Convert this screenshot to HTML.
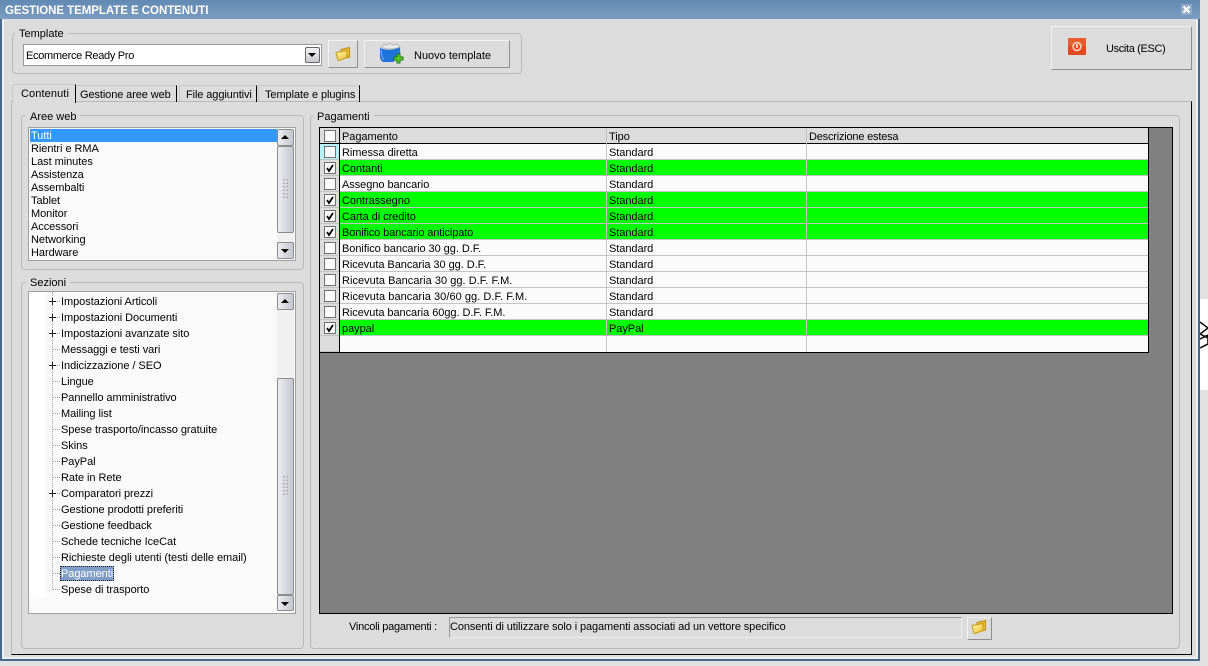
<!DOCTYPE html>
<html><head><meta charset="utf-8">
<style>
html,body{margin:0;padding:0}
body{width:1208px;height:666px;position:relative;overflow:hidden;background:#e2e2e2;font:11px/13px "Liberation Sans",sans-serif;color:#000}
div,span.a{position:absolute;box-sizing:border-box}
.t{white-space:nowrap;height:13px;line-height:13px;margin-top:1px;letter-spacing:-.05px}
.g{border:1px solid #b9b9b9;border-radius:4px}
.lg{background:#dcdcdc;padding:0 4px;white-space:nowrap;height:13px;line-height:13px;margin-top:1px}
.btn{background:#dcdcdc;border:1px solid;border-color:#f2f2f2 #8e8e8e #8e8e8e #f2f2f2}
.sb{background:linear-gradient(90deg,#eeeef2,#d8d8e0 50%,#c6c6ce);border:1px solid #8c8c8c;border-radius:2px}
.ar{width:0;height:0;border-left:5px solid transparent;border-right:5px solid transparent}
.row{left:320px;width:828px;height:16px;background:#fbfbfb;border-bottom:1px solid #c4c4c4}
.row.on{background:#00ff00}
.ind{left:320px;width:19px;height:16px;background:#dcdcdc;border-bottom:1px solid #c4c4c4}
.cb{left:324px;width:12px;height:12px;background:#fff;border:1px solid #707070}
.vl{top:128px;width:1px;height:224px;background:#c4c4c4}
.dots{width:7px;height:22px;background-image:radial-gradient(circle,#a8a8a8 0.8px,transparent 1px);background-size:3.5px 3.5px}
.h{border-top:1px dotted #a0a0a0;height:1px;width:8px;left:52px}
.pl{left:49px;width:7px;height:7px;background:linear-gradient(#222,#222) center/7px 1px no-repeat,linear-gradient(#222,#222) center/1px 7px no-repeat,#fff}
</style></head><body>

<!-- window frame -->
<div style="left:0;top:0;width:1200px;height:661px;background:#dcdcdc;border-left:2px solid #45688c;border-right:2px solid #45688c;border-bottom:2px solid #45688c"></div>
<div style="left:2px;top:19px;width:2px;height:640px;background:#eef0f2"></div>
<div style="left:1196px;top:19px;width:2px;height:640px;background:#eef0f2"></div>
<div style="left:2px;top:657px;width:1196px;height:2px;background:#eef0f2"></div>
<div style="left:1200px;top:299px;width:8px;height:91px;background:#fff"></div>
<svg style="position:absolute;left:1200px;top:320px" width="8" height="30" viewBox="0 0 8 30"><path d="M0 2L8 8M8 8L0 14L8 18M0 19L8 15M0 28L8 24M8 15V24" fill="none" stroke="#111" stroke-width="1.6"/></svg>

<!-- title -->
<div style="left:0;top:0;width:1200px;height:19px;background:linear-gradient(#6289b3,#7b9cc2)"></div>
<div class="t" style="left:5px;top:4px;color:#fff;font:bold 11.5px/13px 'Liberation Sans',sans-serif;letter-spacing:-.05px">GESTIONE TEMPLATE E CONTENUTI</div>
<div style="left:1181px;top:4px;width:11px;height:11px;background:#8fabc9;border-radius:1px"></div>
<svg style="position:absolute;left:1182px;top:5px" width="9" height="9" viewBox="0 0 9 9"><path d="M1.5 1.5L7.5 7.5M7.5 1.5L1.5 7.5" stroke="#fff" stroke-width="2.2"/></svg>

<!-- template group -->
<div class="g" style="left:12px;top:33px;width:510px;height:41px"></div>
<div class="lg" style="left:15px;top:27px">Template</div>
<div style="left:23px;top:44px;width:299px;height:22px;background:#fff;border:1px solid #9a9a9a"></div>
<div class="t" style="left:26px;top:49px;letter-spacing:-.3px">Ecommerce Ready Pro</div>
<div style="left:305px;top:47px;width:15px;height:16px;background:linear-gradient(#f4f4f6,#c8c8d0);border:1px solid #666;border-radius:2px"></div>
<div class="ar" style="left:308px;top:53px;border-top:4px solid #000;border-left-width:4px;border-right-width:4px"></div>

<svg width="0" height="0" style="position:absolute"><defs><linearGradient id="fg" x1="0" y1="0" x2="1" y2="1"><stop offset="0" stop-color="#fff6b0"/><stop offset="1" stop-color="#eec02c"/></linearGradient></defs></svg>

<div class="btn" style="left:328px;top:40px;width:30px;height:28px"></div>
<svg style="position:absolute;left:335px;top:46px" width="16" height="16" viewBox="0 0 16 16"><path d="M6 5V3.5L14.5 1.5V11L11 12Z" fill="#e8bd34" stroke="#b88e14"/><path d="M1 6.5L12 4.5V11.5L4 14.5H3Z" fill="url(#fg)" stroke="#c49a18"/></svg>

<div class="btn" style="left:364px;top:40px;width:146px;height:28px"></div>
<svg style="position:absolute;left:379px;top:42px" width="26" height="24" viewBox="0 0 26 24"><path d="M1 6Q10 10 21 5L21.5 15L14 20L4 20Q1 18 1 15Z" fill="#1e74d8"/><path d="M2.5 8Q2 15 5 18" stroke="#7ab4f0" fill="none"/><path d="M2 5L5 2L8 3L11 1L14 3L18 2L21 5Q11 9 2 5Z" fill="#e8e8e8" stroke="#b0b0b0" stroke-width=".8"/><path d="M15 15h3v-3h3v3h3v3h-3v3h-3v-3h-3z" fill="#5ad020" stroke="#1c7a12"/></svg>
<div class="t" style="left:414px;top:49px;letter-spacing:0">Nuovo template</div>

<!-- exit -->
<div class="btn" style="left:1051px;top:26px;width:141px;height:44px"></div>
<svg style="position:absolute;left:1068px;top:38px" width="18" height="17" viewBox="0 0 18 17"><rect width="18" height="17" rx="1" fill="#e2491f"/><rect width="18" height="8" fill="#f06a40" opacity=".6"/><circle cx="9" cy="8.5" r="4" fill="none" stroke="#ffd8c8" stroke-width="1.5"/><path d="M9 6V10" stroke="#ffe8e0" stroke-width="1.5"/></svg>
<div class="t" style="left:1106px;top:42px;letter-spacing:-.35px">Uscita (ESC)</div>

<!-- tabs & page -->
<div style="left:11px;top:101px;width:1181px;height:554px;border-top:1px solid #b9b9b9;border-left:1px solid #b9b9b9;border-right:1px solid #000;border-bottom:1px solid #000"></div>
<div style="left:12px;top:84px;width:64px;height:19px;background:#dcdcdc;border-top:1px solid #c8c8c8;border-left:1px solid #c8c8c8;border-right:1px solid #000;border-radius:3px 0 0 0"></div>
<div class="t" style="left:21px;top:87px;letter-spacing:.1px">Contenuti</div>
<div style="left:77px;top:85px;width:100px;height:17px;border-top:1px solid #c8c8c8;border-right:1px solid #000"></div>
<div class="t" style="left:80px;top:88px;letter-spacing:-.1px">Gestione aree web</div>
<div style="left:179px;top:85px;width:78px;height:17px;border-top:1px solid #c8c8c8;border-left:1px solid #c8c8c8;border-right:1px solid #000"></div>
<div class="t" style="left:186px;top:88px;letter-spacing:-.1px">File aggiuntivi</div>
<div style="left:258px;top:85px;width:102px;height:17px;border-top:1px solid #c8c8c8;border-left:1px solid #c8c8c8;border-right:1px solid #000"></div>
<div class="t" style="left:265px;top:88px;letter-spacing:-.08px">Template e plugins</div>

<!-- aree web -->
<div class="g" style="left:21px;top:115px;width:283px;height:155px"></div>
<div class="lg" style="left:26px;top:110px">Aree web</div>
<div style="left:28px;top:127px;width:268px;height:134px;background:#fafafa;border:1px solid #a0a0a0"></div>
<div style="left:30px;top:129px;width:247px;height:13px;background:#3399ff"></div>
<div class="t" style="left:31px;top:129px;color:#fff">Tutti</div>
<div class="t" style="left:31px;top:142px">Rientri e RMA</div>
<div class="t" style="left:31px;top:155px">Last minutes</div>
<div class="t" style="left:31px;top:168px">Assistenza</div>
<div class="t" style="left:31px;top:181px">Assembalti</div>
<div class="t" style="left:31px;top:194px">Tablet</div>
<div class="t" style="left:31px;top:207px">Monitor</div>
<div class="t" style="left:31px;top:220px">Accessori</div>
<div class="t" style="left:31px;top:233px">Networking</div>
<div class="t" style="left:31px;top:246px">Hardware</div>
<div style="left:277px;top:129px;width:17px;height:130px;background:#f0f0f0"></div>
<div class="sb" style="left:277px;top:129px;width:17px;height:17px"></div>
<div class="ar" style="left:281px;top:135px;border-bottom:4px solid #000;border-left-width:4px;border-right-width:4px"></div>
<div class="sb" style="left:277px;top:146px;width:17px;height:87px"></div>
<div class="dots" style="left:282px;top:178px"></div>
<div class="sb" style="left:277px;top:242px;width:17px;height:17px"></div>
<div class="ar" style="left:281px;top:249px;border-top:4px solid #000;border-left-width:4px;border-right-width:4px"></div>

<!-- sezioni -->
<div class="g" style="left:21px;top:282px;width:283px;height:367px"></div>
<div class="lg" style="left:26px;top:276px">Sezioni</div>
<div style="left:28px;top:291px;width:268px;height:323px;background:#fafafa;border:1px solid #a0a0a0"></div>
<div style="left:29px;top:292px;width:16px;height:305px;background:#fff"></div>
<div style="left:52px;top:292px;width:1px;height:298px;border-left:1px dotted #a8a8a8"></div>
<div class="h" style="top:301px"></div><div class="pl" style="top:298px"></div>
<div class="h" style="top:317px"></div><div class="pl" style="top:314px"></div>
<div class="h" style="top:333px"></div><div class="pl" style="top:330px"></div>
<div class="h" style="top:349px"></div>
<div class="h" style="top:365px"></div><div class="pl" style="top:362px"></div>
<div class="h" style="top:381px"></div>
<div class="h" style="top:397px"></div>
<div class="h" style="top:413px"></div>
<div class="h" style="top:429px"></div>
<div class="h" style="top:445px"></div>
<div class="h" style="top:461px"></div>
<div class="h" style="top:477px"></div>
<div class="h" style="top:493px"></div><div class="pl" style="top:490px"></div>
<div class="h" style="top:509px"></div>
<div class="h" style="top:525px"></div>
<div class="h" style="top:541px"></div>
<div class="h" style="top:557px"></div>
<div class="h" style="top:573px"></div>
<div class="h" style="top:589px"></div>
<div class="t" style="left:61px;top:295px">Impostazioni Articoli</div>
<div class="t" style="left:61px;top:311px">Impostazioni Documenti</div>
<div class="t" style="left:61px;top:327px">Impostazioni avanzate sito</div>
<div class="t" style="left:61px;top:343px">Messaggi e testi vari</div>
<div class="t" style="left:61px;top:359px">Indicizzazione / SEO</div>
<div class="t" style="left:61px;top:375px">Lingue</div>
<div class="t" style="left:61px;top:391px">Pannello amministrativo</div>
<div class="t" style="left:61px;top:407px">Mailing list</div>
<div class="t" style="left:61px;top:423px">Spese trasporto/incasso gratuite</div>
<div class="t" style="left:61px;top:439px">Skins</div>
<div class="t" style="left:61px;top:455px">PayPal</div>
<div class="t" style="left:61px;top:471px">Rate in Rete</div>
<div class="t" style="left:61px;top:487px">Comparatori prezzi</div>
<div class="t" style="left:61px;top:503px">Gestione prodotti preferiti</div>
<div class="t" style="left:61px;top:519px">Gestione feedback</div>
<div class="t" style="left:61px;top:535px">Schede tecniche IceCat</div>
<div class="t" style="left:61px;top:551px">Richieste degli utenti (testi delle email)</div>
<div style="left:60px;top:566px;width:54px;height:15px;background:#7f9fc8;border:1px dotted #222"></div>
<div class="t" style="left:61px;top:567px;color:#fff">Pagamenti</div>
<div class="t" style="left:61px;top:583px">Spese di trasporto</div>
<div style="left:277px;top:293px;width:17px;height:318px;background:#f0f0f0"></div>
<div class="sb" style="left:277px;top:293px;width:17px;height:17px"></div>
<div class="ar" style="left:281px;top:299px;border-bottom:4px solid #000;border-left-width:4px;border-right-width:4px"></div>
<div class="sb" style="left:277px;top:378px;width:17px;height:217px"></div>
<div class="dots" style="left:282px;top:475px"></div>
<div class="sb" style="left:277px;top:595px;width:17px;height:16px"></div>
<div class="ar" style="left:281px;top:602px;border-top:4px solid #000;border-left-width:4px;border-right-width:4px"></div>

<!-- pagamenti -->
<div class="g" style="left:310px;top:115px;width:870px;height:534px"></div>
<div class="lg" style="left:313px;top:110px">Pagamenti</div>
<div style="left:319px;top:127px;width:854px;height:487px;background:#808080;border:1px solid #000"></div>
<div style="left:320px;top:128px;width:829px;height:225px;background:#fbfbfb;border-right:1px solid #000;border-bottom:1px solid #000"></div>
<div style="left:320px;top:128px;width:828px;height:16px;background:#dcdcdc;border-bottom:1px solid #000"></div>

<div class="row" style="top:144px"></div>
<div class="row on" style="top:160px"></div>
<div class="row" style="top:176px"></div>
<div class="row on" style="top:192px"></div>
<div class="row on" style="top:208px"></div>
<div class="row on" style="top:224px"></div>
<div class="row" style="top:240px"></div>
<div class="row" style="top:256px"></div>
<div class="row" style="top:272px"></div>
<div class="row" style="top:288px"></div>
<div class="row" style="top:304px"></div>
<div class="row on" style="top:320px"></div>
<div class="ind" style="top:144px;background:#b8f0f8"></div>
<div class="ind" style="top:160px"></div><div class="ind" style="top:176px"></div><div class="ind" style="top:192px"></div><div class="ind" style="top:208px"></div><div class="ind" style="top:224px"></div><div class="ind" style="top:240px"></div><div class="ind" style="top:256px"></div><div class="ind" style="top:272px"></div><div class="ind" style="top:288px"></div><div class="ind" style="top:304px"></div><div class="ind" style="top:320px"></div><div class="ind" style="top:336px"></div>
<div style="left:339px;top:128px;width:1px;height:224px;background:#000"></div>
<div class="vl" style="left:606px"></div>
<div class="vl" style="left:806px"></div>

<div class="cb" style="top:130px"></div>
<div class="cb" style="top:146px"></div>
<div class="cb" style="top:162px"></div>
<div class="cb" style="top:178px"></div>
<div class="cb" style="top:194px"></div>
<div class="cb" style="top:210px"></div>
<div class="cb" style="top:226px"></div>
<div class="cb" style="top:242px"></div>
<div class="cb" style="top:258px"></div>
<div class="cb" style="top:274px"></div>
<div class="cb" style="top:290px"></div>
<div class="cb" style="top:306px"></div>
<div class="cb" style="top:322px"></div>
<svg style="position:absolute;left:324px;top:128px" width="12" height="210" viewBox="0 0 12 210" fill="none" stroke="#000" stroke-width="1.8"><path d="M3 40L5 43L9 37"/><path d="M3 72L5 75L9 69"/><path d="M3 88L5 91L9 85"/><path d="M3 104L5 107L9 101"/><path d="M3 200L5 203L9 197"/></svg>

<div class="t" style="left:342px;top:130px">Pagamento</div><div class="t" style="left:609px;top:130px">Tipo</div><div class="t" style="left:809px;top:130px;letter-spacing:-.2px">Descrizione estesa</div>
<div class="t" style="left:342px;top:146px">Rimessa diretta</div><div class="t" style="left:609px;top:146px">Standard</div>
<div class="t" style="left:342px;top:162px">Contanti</div><div class="t" style="left:609px;top:162px">Standard</div>
<div class="t" style="left:342px;top:178px">Assegno bancario</div><div class="t" style="left:609px;top:178px">Standard</div>
<div class="t" style="left:342px;top:194px">Contrassegno</div><div class="t" style="left:609px;top:194px">Standard</div>
<div class="t" style="left:342px;top:210px">Carta di credito</div><div class="t" style="left:609px;top:210px">Standard</div>
<div class="t" style="left:342px;top:226px;letter-spacing:-.12px">Bonifico bancario anticipato</div><div class="t" style="left:609px;top:226px">Standard</div>
<div class="t" style="left:342px;top:242px">Bonifico bancario 30 gg. D.F.</div><div class="t" style="left:609px;top:242px">Standard</div>
<div class="t" style="left:342px;top:258px">Ricevuta Bancaria 30 gg. D.F.</div><div class="t" style="left:609px;top:258px">Standard</div>
<div class="t" style="left:342px;top:274px;letter-spacing:.03px">Ricevuta Bancaria 30 gg. D.F. F.M.</div><div class="t" style="left:609px;top:274px">Standard</div>
<div class="t" style="left:342px;top:290px;letter-spacing:.05px">Ricevuta bancaria 30/60 gg. D.F. F.M.</div><div class="t" style="left:609px;top:290px">Standard</div>
<div class="t" style="left:342px;top:306px">Ricevuta bancaria 60gg. D.F. F.M.</div><div class="t" style="left:609px;top:306px">Standard</div>
<div class="t" style="left:342px;top:322px">paypal</div><div class="t" style="left:609px;top:322px">PayPal</div>

<!-- vincoli -->
<div class="t" style="left:349px;top:620px;letter-spacing:-.25px">Vincoli pagamenti :</div>
<div style="left:449px;top:617px;width:513px;height:21px;background:#dcdcdc;border:1px solid;border-color:#989898 #eeeeee #eeeeee #989898"></div>
<div class="t" style="left:450px;top:620px;letter-spacing:-.11px">Consenti di utilizzare solo i pagamenti associati ad un vettore specifico</div>
<div class="btn" style="left:967px;top:617px;width:25px;height:23px"></div>
<svg style="position:absolute;left:971px;top:619px" width="16" height="16" viewBox="0 0 16 16"><path d="M6 5V3.5L14.5 1.5V11L11 12Z" fill="#e8bd34" stroke="#b88e14"/><path d="M1 6.5L12 4.5V11.5L4 14.5H3Z" fill="url(#fg)" stroke="#c49a18"/></svg>

</body></html>
